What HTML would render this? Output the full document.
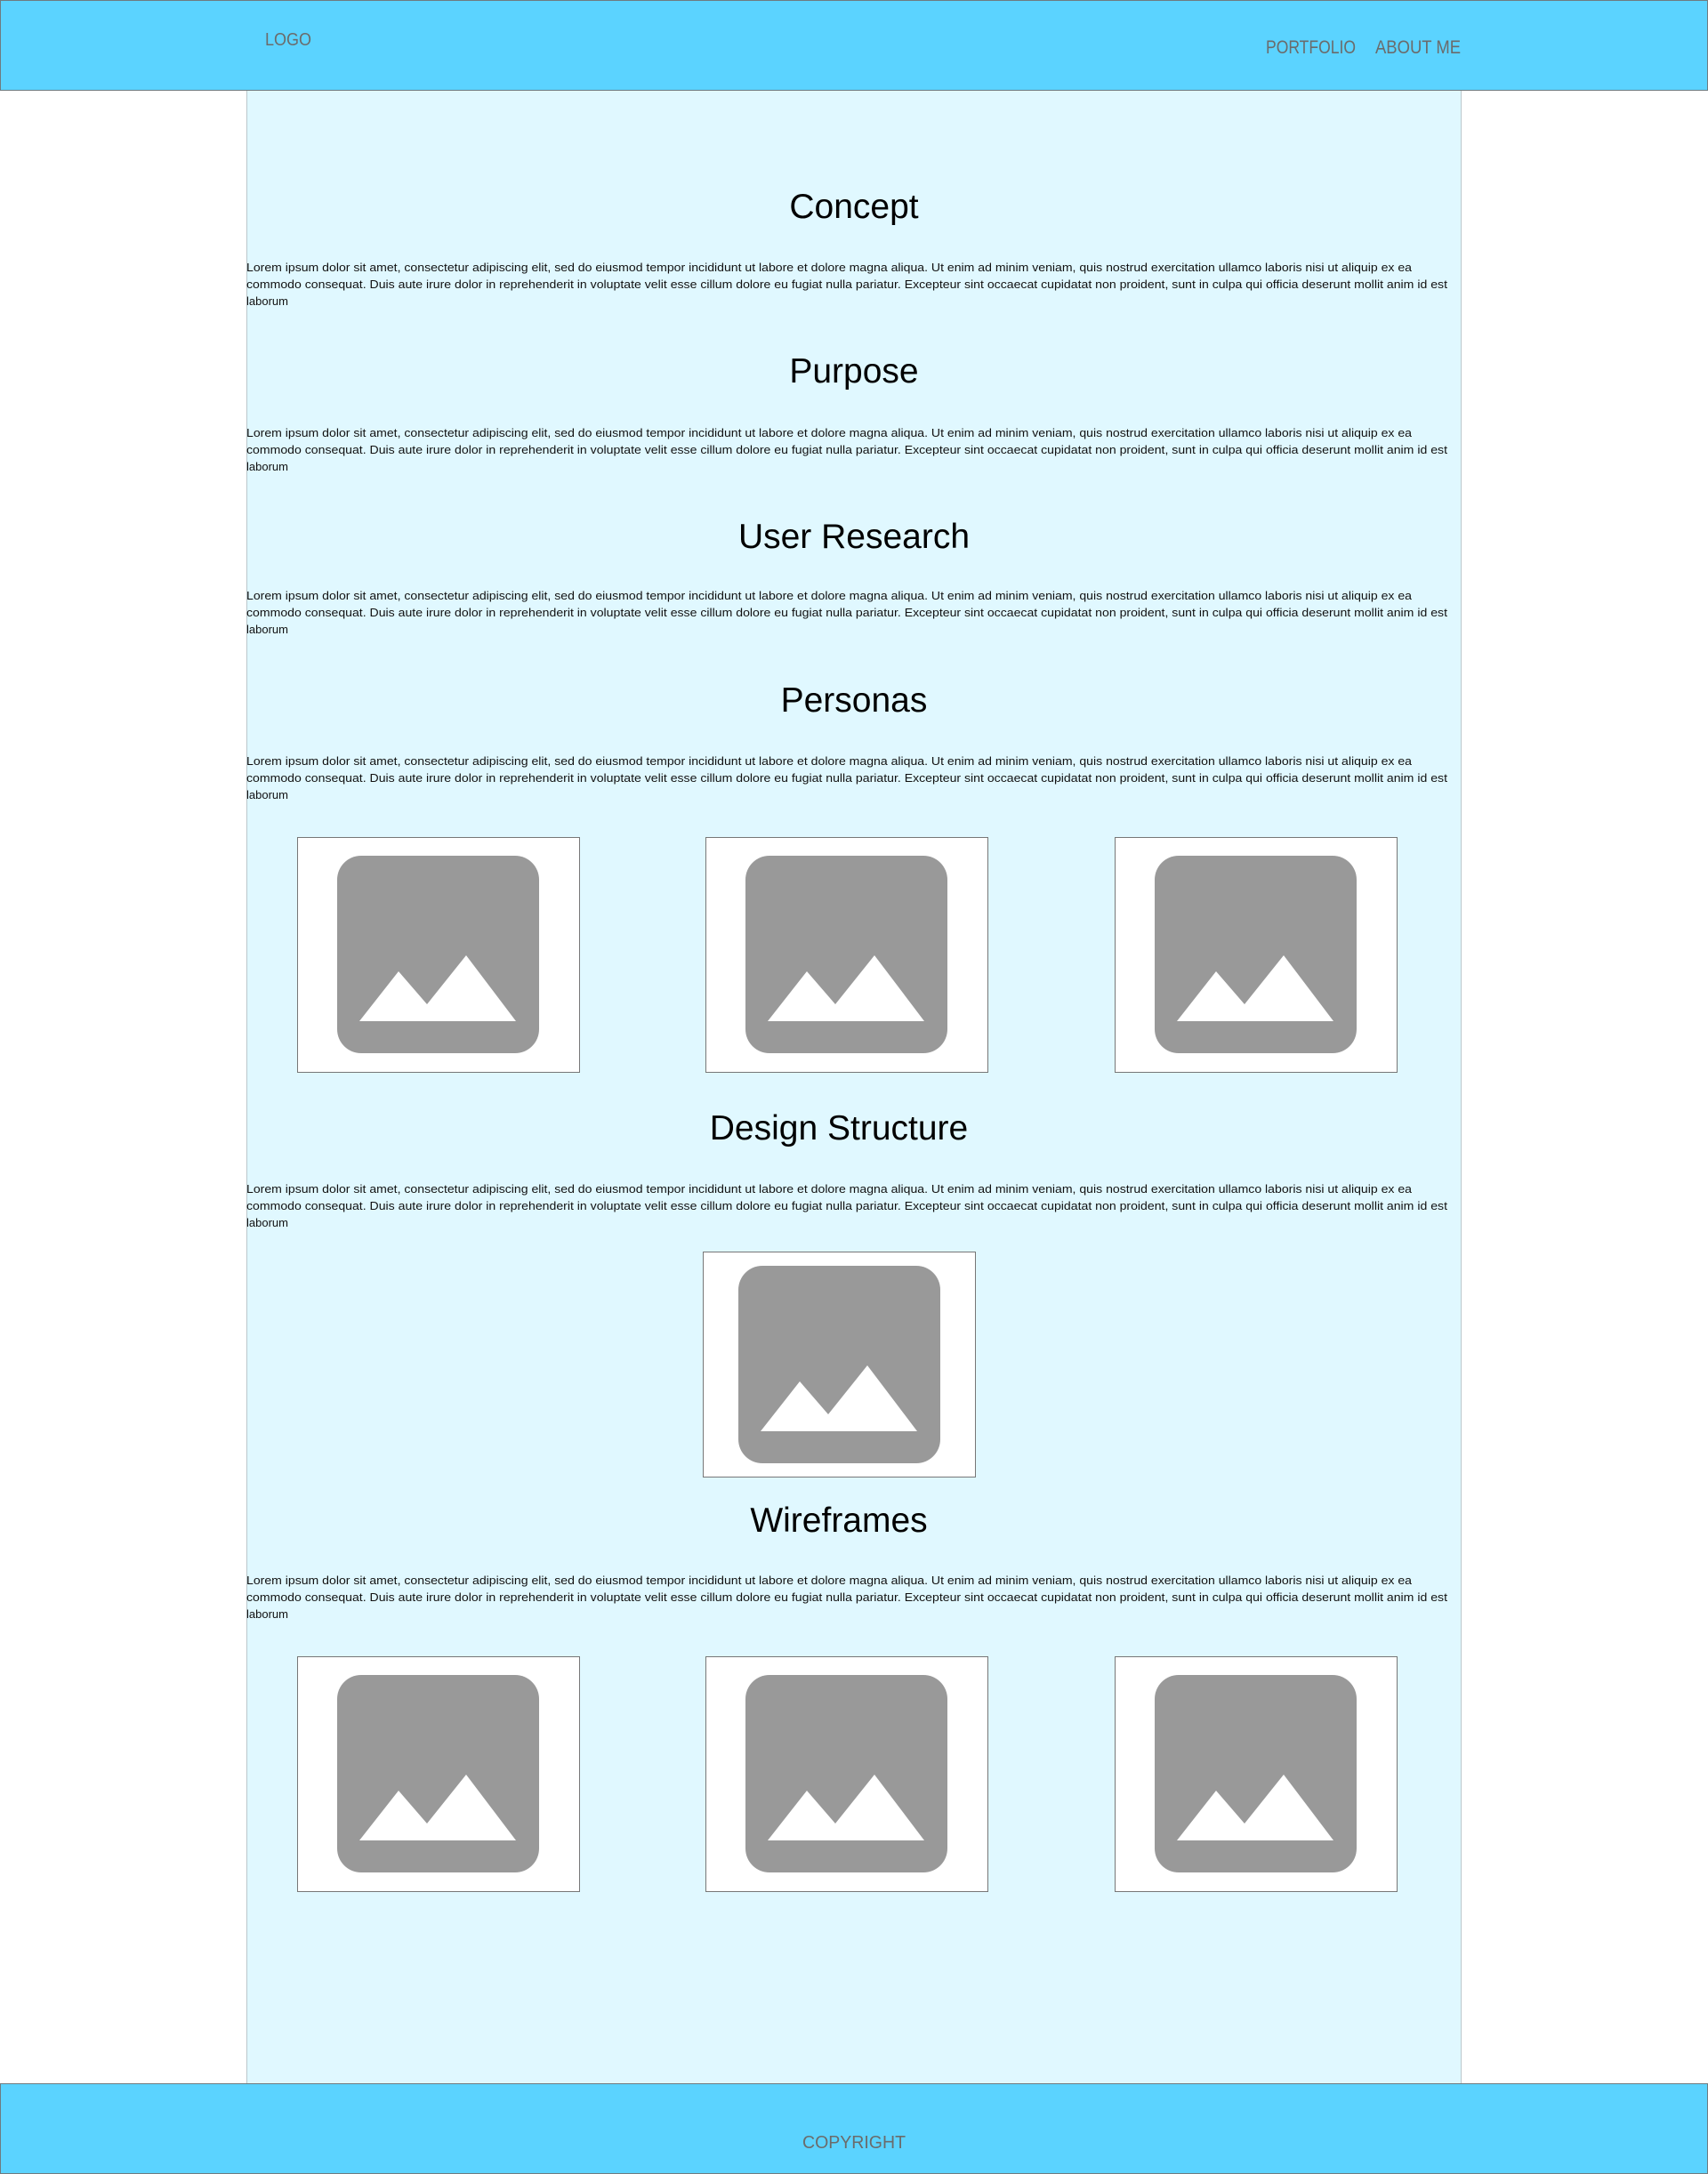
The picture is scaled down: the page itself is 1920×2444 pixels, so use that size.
<!DOCTYPE html>
<html><head><meta charset="utf-8"><style>
html,body{margin:0;padding:0;background:#fff;}
body{width:1920px;height:2444px;position:relative;overflow:hidden;font-family:"Liberation Sans",sans-serif;}
.hdr{position:absolute;left:0;top:0;width:1918px;height:100px;background:#5bd3ff;border:1px solid #6f7b80;}
.ftr{position:absolute;left:0;top:2342px;width:1918px;height:100px;background:#5bd3ff;border:1px solid #6f7b80;}
.main{position:absolute;left:277px;top:102px;width:1364px;height:2240px;background:#e0f8ff;border-left:1px solid #b9c7cb;border-right:1px solid #b9c7cb;}
.box{position:absolute;background:#fff;border:1px solid #777;box-sizing:border-box;}
.ic{position:absolute;width:227px;height:222px;}
svg.t{position:absolute;left:0;top:0;}
</style></head><body>
<div class="hdr"></div>
<div class="main"></div>
<div class="ftr"></div>

<div class="box" style="left:334px;top:941px;width:318px;height:265px"><svg class="ic" style="left:44px;top:20px" viewBox="0 0 227 222"><rect width="227" height="222" rx="27" fill="#999"/><path d="M25 186 L69 130 L101 167 L145 112 L201 186 Z" fill="#fff"/></svg></div>
<div class="box" style="left:793px;top:941px;width:318px;height:265px"><svg class="ic" style="left:44px;top:20px" viewBox="0 0 227 222"><rect width="227" height="222" rx="27" fill="#999"/><path d="M25 186 L69 130 L101 167 L145 112 L201 186 Z" fill="#fff"/></svg></div>
<div class="box" style="left:1253px;top:941px;width:318px;height:265px"><svg class="ic" style="left:44px;top:20px" viewBox="0 0 227 222"><rect width="227" height="222" rx="27" fill="#999"/><path d="M25 186 L69 130 L101 167 L145 112 L201 186 Z" fill="#fff"/></svg></div>

<div class="box" style="left:790px;top:1407px;width:307px;height:254px"><svg class="ic" style="left:39px;top:15px" viewBox="0 0 227 222"><rect width="227" height="222" rx="27" fill="#999"/><path d="M25 186 L69 130 L101 167 L145 112 L201 186 Z" fill="#fff"/></svg></div>

<div class="box" style="left:334px;top:1862px;width:318px;height:265px"><svg class="ic" style="left:44px;top:20px" viewBox="0 0 227 222"><rect width="227" height="222" rx="27" fill="#999"/><path d="M25 186 L69 130 L101 167 L145 112 L201 186 Z" fill="#fff"/></svg></div>
<div class="box" style="left:793px;top:1862px;width:318px;height:265px"><svg class="ic" style="left:44px;top:20px" viewBox="0 0 227 222"><rect width="227" height="222" rx="27" fill="#999"/><path d="M25 186 L69 130 L101 167 L145 112 L201 186 Z" fill="#fff"/></svg></div>
<div class="box" style="left:1253px;top:1862px;width:318px;height:265px"><svg class="ic" style="left:44px;top:20px" viewBox="0 0 227 222"><rect width="227" height="222" rx="27" fill="#999"/><path d="M25 186 L69 130 L101 167 L145 112 L201 186 Z" fill="#fff"/></svg></div>

<svg class="t" width="1920" height="2444" viewBox="0 0 1920 2444" font-family="Liberation Sans, sans-serif">
<g fill="#6b6b6b">
<text x="298" y="51" font-size="20" textLength="52" lengthAdjust="spacingAndGlyphs">LOGO</text>
<text x="1423" y="60" font-size="21" textLength="101" lengthAdjust="spacingAndGlyphs">PORTFOLIO</text>
<text x="1546" y="60" font-size="21" textLength="96" lengthAdjust="spacingAndGlyphs">ABOUT ME</text>
<text x="902" y="2415" font-size="20" textLength="116" lengthAdjust="spacingAndGlyphs">COPYRIGHT</text>
</g>
<g fill="#000" font-size="39" text-anchor="middle">
<text x="960" y="245">Concept</text>
<text x="960" y="430">Purpose</text>
<text x="960" y="616">User Research</text>
<text x="960" y="800">Personas</text>
<text x="943" y="1281">Design Structure</text>
<text x="943" y="1722">Wireframes</text>
</g>
<g fill="#111" font-size="13">
<g transform="translate(277,305)"><text y="0" textLength="1310" lengthAdjust="spacingAndGlyphs">Lorem ipsum dolor sit amet, consectetur adipiscing elit, sed do eiusmod tempor incididunt ut labore et dolore magna aliqua. Ut enim ad minim veniam, quis nostrud exercitation ullamco laboris nisi ut aliquip ex ea</text><text y="19" textLength="1350" lengthAdjust="spacingAndGlyphs">commodo consequat. Duis aute irure dolor in reprehenderit in voluptate velit esse cillum dolore eu fugiat nulla pariatur. Excepteur sint occaecat cupidatat non proident, sunt in culpa qui officia deserunt mollit anim id est</text><text y="38">laborum</text></g>
<g transform="translate(277,491)"><text y="0" textLength="1310" lengthAdjust="spacingAndGlyphs">Lorem ipsum dolor sit amet, consectetur adipiscing elit, sed do eiusmod tempor incididunt ut labore et dolore magna aliqua. Ut enim ad minim veniam, quis nostrud exercitation ullamco laboris nisi ut aliquip ex ea</text><text y="19" textLength="1350" lengthAdjust="spacingAndGlyphs">commodo consequat. Duis aute irure dolor in reprehenderit in voluptate velit esse cillum dolore eu fugiat nulla pariatur. Excepteur sint occaecat cupidatat non proident, sunt in culpa qui officia deserunt mollit anim id est</text><text y="38">laborum</text></g>
<g transform="translate(277,674)"><text y="0" textLength="1310" lengthAdjust="spacingAndGlyphs">Lorem ipsum dolor sit amet, consectetur adipiscing elit, sed do eiusmod tempor incididunt ut labore et dolore magna aliqua. Ut enim ad minim veniam, quis nostrud exercitation ullamco laboris nisi ut aliquip ex ea</text><text y="19" textLength="1350" lengthAdjust="spacingAndGlyphs">commodo consequat. Duis aute irure dolor in reprehenderit in voluptate velit esse cillum dolore eu fugiat nulla pariatur. Excepteur sint occaecat cupidatat non proident, sunt in culpa qui officia deserunt mollit anim id est</text><text y="38">laborum</text></g>
<g transform="translate(277,860)"><text y="0" textLength="1310" lengthAdjust="spacingAndGlyphs">Lorem ipsum dolor sit amet, consectetur adipiscing elit, sed do eiusmod tempor incididunt ut labore et dolore magna aliqua. Ut enim ad minim veniam, quis nostrud exercitation ullamco laboris nisi ut aliquip ex ea</text><text y="19" textLength="1350" lengthAdjust="spacingAndGlyphs">commodo consequat. Duis aute irure dolor in reprehenderit in voluptate velit esse cillum dolore eu fugiat nulla pariatur. Excepteur sint occaecat cupidatat non proident, sunt in culpa qui officia deserunt mollit anim id est</text><text y="38">laborum</text></g>
<g transform="translate(277,1341)"><text y="0" textLength="1310" lengthAdjust="spacingAndGlyphs">Lorem ipsum dolor sit amet, consectetur adipiscing elit, sed do eiusmod tempor incididunt ut labore et dolore magna aliqua. Ut enim ad minim veniam, quis nostrud exercitation ullamco laboris nisi ut aliquip ex ea</text><text y="19" textLength="1350" lengthAdjust="spacingAndGlyphs">commodo consequat. Duis aute irure dolor in reprehenderit in voluptate velit esse cillum dolore eu fugiat nulla pariatur. Excepteur sint occaecat cupidatat non proident, sunt in culpa qui officia deserunt mollit anim id est</text><text y="38">laborum</text></g>
<g transform="translate(277,1781)"><text y="0" textLength="1310" lengthAdjust="spacingAndGlyphs">Lorem ipsum dolor sit amet, consectetur adipiscing elit, sed do eiusmod tempor incididunt ut labore et dolore magna aliqua. Ut enim ad minim veniam, quis nostrud exercitation ullamco laboris nisi ut aliquip ex ea</text><text y="19" textLength="1350" lengthAdjust="spacingAndGlyphs">commodo consequat. Duis aute irure dolor in reprehenderit in voluptate velit esse cillum dolore eu fugiat nulla pariatur. Excepteur sint occaecat cupidatat non proident, sunt in culpa qui officia deserunt mollit anim id est</text><text y="38">laborum</text></g>
</g>
</svg>
</body></html>
